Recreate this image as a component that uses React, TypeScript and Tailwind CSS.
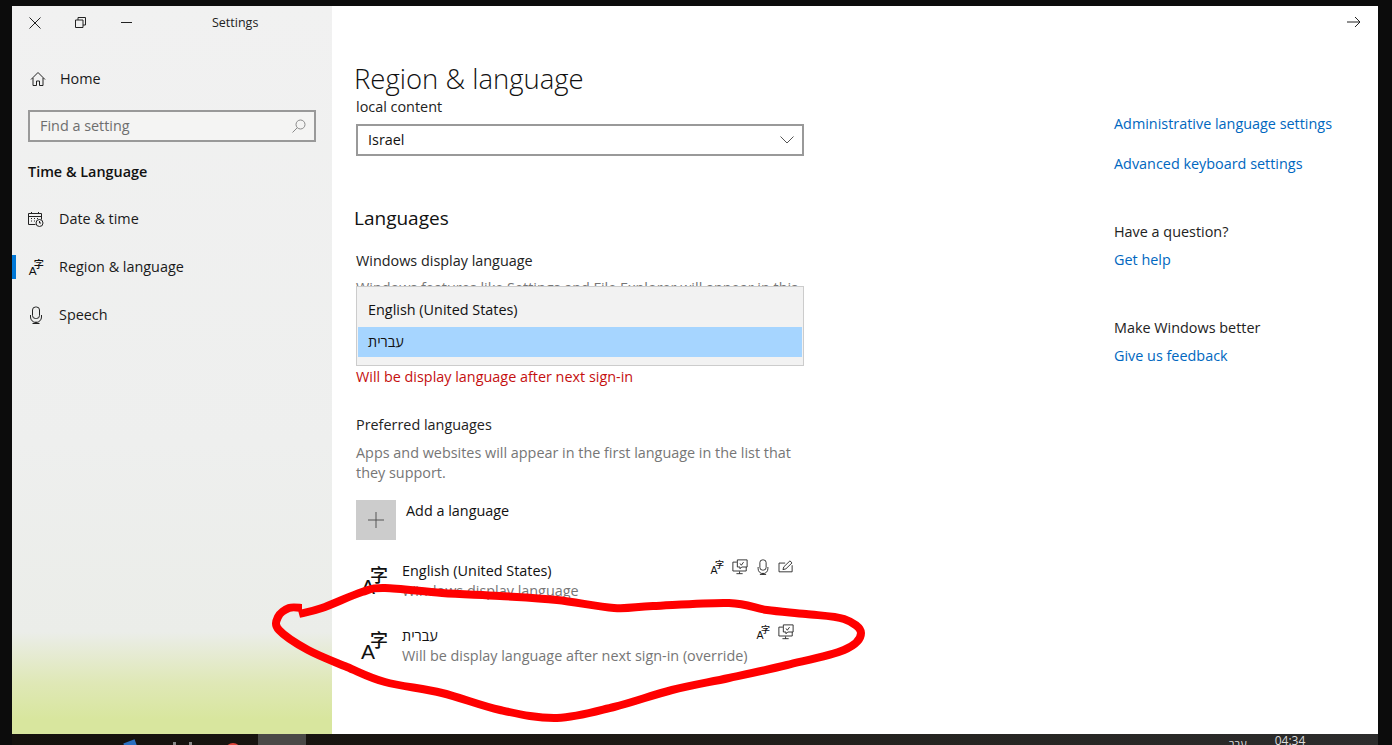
import React from 'react';

const font = "font-['Open_Sans','Noto_Sans_CJK_SC',sans-serif]";

type IconProps = { className?: string };

const LangIcon = ({ className }: IconProps) => (
  <svg viewBox="0 0 28 32" className={className} fill="#111">
    <text x="1" y="30" fontSize="21" fontFamily="Liberation Sans, sans-serif">A</text>
    <text x="10" y="18" fontSize="18" fontWeight="500" fontFamily="Noto Sans CJK SC, sans-serif">字</text>
  </svg>
);

const HomeIcon = () => (
  <svg viewBox="0 0 16 16" className="h-4 w-4" fill="none" stroke="#222" strokeWidth="1">
    <path d="M1 8.500 8 1.500l7 7M3 7v7.500h3.500V10h3v4.500H13V7" />
  </svg>
);

const CalendarIcon = () => (
  <svg viewBox="0 0 16 16" className="h-4 w-4" fill="none" stroke="#222" strokeWidth="1">
    <path d="M.5 2.500h13v6M.5 2.500v11h7M.5 5.500h13M3.500 1v2M10.500 1v2" />
    <path d="M3 7.500h1M6 7.500h1M9 7.500h1M3 10h1M6 10h1" strokeWidth="1.200" />
    <circle cx="11.500" cy="12" r="3.500" fill="#eee" />
    <path d="M11.500 10v2H13" />
  </svg>
);

const MicIcon = ({ className }: IconProps) => (
  <svg viewBox="0 0 14 18" className={className} fill="none" stroke="#222" strokeWidth="1">
    <rect x="3.500" y="1" width="7" height="11.500" rx="3" />
    <path d="M1.500 9v2a5 5 0 0 0 11 0V9M7 15.500v2M3.500 17.500h7" />
  </svg>
);

const DisplayIcon = ({ className }: IconProps) => (
  <svg viewBox="0 0 18 18" className={className} fill="none" stroke="#222" strokeWidth="1">
    <path d="M5.500 3.500H1v10h15V9" />
    <path d="M6 1h11v8h-6l-2 2V9H6z" fill="#fff" />
    <path d="M5 16.500h7M8.500 14v2.500" />
    <path d="M9 5l1.500 2L13 3.500" />
  </svg>
);

const PenIcon = ({ className }: IconProps) => (
  <svg viewBox="0 0 18 16" className={className} fill="none" stroke="#222" strokeWidth="1">
    <path d="M8 3.500H1v10h15V6" />
    <path d="M5.500 11l1-3.200L13.500 1l2.400 2.300-7 6.800z" fill="#fff" />
  </svg>
);

const SearchIcon = () => (
  <svg viewBox="0 0 14 14" className="h-[14px] w-[14px]" fill="none" stroke="#8a8a8a" strokeWidth="1">
    <circle cx="8.500" cy="5.500" r="4.500" />
    <path d="M5.300 8.700.5 13.500" />
  </svg>
);

const NavItem = ({ icon, label, active }: { icon: React.ReactNode; label: string; active?: boolean }) => (
  <div className="relative flex h-12 items-center pl-4 text-[14.4px] text-[#1a1a1a]">
    {active && <span className="absolute left-0 top-3 h-6 w-1 bg-[#0078d7]" />}
    <span className="flex w-[31px] items-center">{icon}</span>
    {label}
  </div>
);

const LangRow = ({ name, sub, icons, className }: { name: string; sub: string; icons: React.ReactNode; className?: string }) => (
  <div className={`flex items-start ${className}`}>
    <LangIcon className="ml-[4px] mt-[3px] h-[32px] w-[28px] shrink-0" />
    <div className="ml-[14px] flex-1">
      <div className="text-[14.4px] leading-5 text-[#111]">{name}</div>
      <div className="text-[14.4px] leading-5 text-[#767676]">{sub}</div>
    </div>
    <div className="-mt-[2px] flex items-center gap-[8px] pr-[10px]">{icons}</div>
  </div>
);

const SideLink = ({ children, className }: { children: React.ReactNode; className?: string }) => (
  <div className={`text-[14.4px] leading-5 text-[#0067c0] ${className}`}>{children}</div>
);

const markerPoints: [number, number][] = [
  [299, 614], [322, 608], [362, 592], [385, 588], [442, 593], [500, 596], [557, 600], [614, 608], [653, 606],
  [729, 603], [767, 610], [806, 614], [844, 619], [861, 633], [844, 650], [787, 665], [729, 678], [672, 690],
  [614, 707], [557, 718], [500, 710], [442, 693], [385, 682], [347, 667], [308, 650], [279, 630], [278, 617],
  [289, 608], [302, 608],
];

// catmull-rom through the points so the marker line stays smooth
const markerPath = markerPoints
  .map(([x, y], i, pts) => {
    if (i === 0) return `M${x} ${y}`;
    const p0 = pts[Math.max(i - 2, 0)];
    const p1 = pts[i - 1];
    const p3 = pts[Math.min(i + 1, pts.length - 1)];
    const c1x = p1[0] + (x - p0[0]) / 6;
    const c1y = p1[1] + (y - p0[1]) / 6;
    const c2x = x - (p3[0] - p1[0]) / 6;
    const c2y = y - (p3[1] - p1[1]) / 6;
    return `C${c1x} ${c1y} ${c2x} ${c2y} ${x} ${y}`;
  })
  .join(' ');

export default function App() {
  return (
    <div className={`relative h-[745px] w-[1392px] overflow-hidden bg-[#0c0c0c] pl-3 pr-[14px] pt-[6px] ${font}`}>
      <div className="flex h-[728px] bg-white">
        {/* left nav */}
        <aside className="w-[320px] shrink-0 bg-[linear-gradient(180deg,#f1f1f1_0%,#eeefee_60%,#ebede9_86%,#dfe8b6_93%,#d8e69e_98%)]">
          <div className="flex h-[33px] items-center pl-[17px] text-[#222]">
            <svg viewBox="0 0 12 12" className="h-[12px] w-[12px]" fill="none" stroke="#222" strokeWidth="1">
              <path d="M.5.500l11 11M11.500.500l-11 11" />
            </svg>
            <svg viewBox="0 0 11 11" className="ml-[34px] h-[11px] w-[11px]" fill="none" stroke="#222" strokeWidth="1">
              <path d="M.5 3h7.500v7.500H.5zM3 3V.5h7.500V8H8" />
            </svg>
            <span className="ml-[35px] h-px w-[11px] bg-[#222]" />
            <span className="ml-[80px] pt-[2px] text-[12.500px] text-[#222]">Settings</span>
          </div>
          <div className="mt-[16px] flex h-12 items-center pl-[18px] text-[14.4px] text-[#1a1a1a]">
            <HomeIcon />
            <span className="ml-[14px]">Home</span>
          </div>
          <div className="mx-4 mt-[7px] flex h-8 items-center justify-between border-2 border-[#999] bg-[#f4f4f3] pl-[10px] pr-2 text-[14.4px] text-[#6e6e6e]">
            Find a setting
            <SearchIcon />
          </div>
          <div className="mt-[20px] pl-4 text-[14.4px] font-semibold leading-5 text-[#111]">Time &amp; Language</div>
          <div className="mt-[13px]">
            <NavItem icon={<CalendarIcon />} label="Date & time" />
            <NavItem icon={<LangIcon className="h-[18px] w-4" />} label="Region & language" active />
            <NavItem icon={<MicIcon className="ml-[1px] h-[18px] w-[14px]" />} label="Speech" />
          </div>
        </aside>

        {/* page body */}
        <main className="relative flex-1">
          <div className="pl-[22px] pt-[53px] text-[27.500px] font-light leading-10 text-[#111]">Region &amp; language</div>
          <div className="w-[472px] pl-6">
            <div className="-mt-[2px] text-[14.4px] leading-5 text-[#222]">local content</div>
            <div className="mt-[7px] flex h-8 items-center justify-between border-2 border-[#999] pl-[10px] pr-[8px] text-[14.4px] text-[#111]">
              Israel
              <svg viewBox="0 0 14 8" className="h-2 w-[14px]" fill="none" stroke="#555" strokeWidth="1">
                <path d="M.5.500 7 7l6.500-6.500" />
              </svg>
            </div>
            <div className="-ml-[2px] mt-[48px] text-[19px] leading-7 text-[#111]">Languages</div>
            <div className="mt-[19px] text-[14.4px] leading-5 text-[#222]">Windows display language</div>
            <div className="relative mt-[7px] h-[125px]">
              <div className="whitespace-nowrap text-[14.4px] leading-5 text-[#767676]">Windows features like Settings and File Explorer will appear in this</div>
              <div className="absolute left-0 top-[8px] h-[80px] w-full border border-[#ccc] bg-[#f2f2f2] px-px pt-[13px] text-[14.4px] text-[#111]">
                <div className="pl-[10px] leading-5">English (United States)</div>
                <div className="mt-[7px] flex h-[30px] items-center bg-[#a6d5ff] pl-[10px]">עברית</div>
              </div>
              <div className="absolute left-0 top-[89px] text-[14.4px] leading-5 text-[#c50f0f]">Will be display language after next sign-in</div>
            </div>
            <div className="mt-[12px] text-[14.4px] leading-5 text-[#222]">Preferred languages</div>
            <div className="mt-[8px] text-[14.4px] leading-5 text-[#767676]">Apps and websites will appear in the first language in the list that they support.</div>
            <div className="mt-[17px] flex items-start">
              <div className="flex h-10 w-10 items-center justify-center bg-[#cccccc]">
                <svg viewBox="0 0 16 16" className="h-4 w-4" stroke="#555" strokeWidth="1"><path d="M8 0v16M0 8h16" /></svg>
              </div>
              <span className="ml-[10px] mt-px text-[14.4px] leading-5 text-[#111]">Add a language</span>
            </div>
            <LangRow
              className="mt-[21px]"
              name="English (United States)"
              sub="Windows display language"
              icons={<>
                <LangIcon className="h-[16px] w-[14px]" />
                <DisplayIcon className="h-4 w-4" />
                <MicIcon className="h-4 w-[14px]" />
                <PenIcon className="h-[14px] w-4" />
              </>}
            />
            <LangRow
              className="mt-[25px]"
              name="עברית"
              sub="Will be display language after next sign-in (override)"
              icons={<>
                <LangIcon className="h-[16px] w-[14px]" />
                <DisplayIcon className="h-4 w-4" />
              </>}
            />
          </div>

          {/* help links */}
          <div className="absolute left-[782px] top-[108px] w-[240px]">
            <SideLink>Administrative language settings</SideLink>
            <SideLink className="mt-5">Advanced keyboard settings</SideLink>
            <div className="mt-[48px] text-[14.4px] leading-5 text-[#222]">Have a question?</div>
            <SideLink className="mt-2">Get help</SideLink>
            <div className="mt-[48px] text-[14.4px] leading-5 text-[#222]">Make Windows better</div>
            <SideLink className="mt-2">Give us feedback</SideLink>
          </div>

          <svg viewBox="0 0 14 12" className="absolute right-[17px] top-[10px] h-3 w-[14px]" fill="none" stroke="#222" strokeWidth="1">
            <path d="M0 6h13M8 1l5 5-5 5" />
          </svg>
        </main>
      </div>

      {/* taskbar strip, mostly cut off */}
      <div className="flex h-[11px] overflow-hidden bg-[linear-gradient(90deg,#14110d_0%,#1c1813_40%,#262522_70%,#2c2c2c_100%)]">
        <span className="ml-[113px] mt-[7px] h-3 w-3 rotate-[-20deg] bg-[#2a6fc0]" />
        <span className="ml-[36px] mt-[8px] h-3 w-[3px] bg-[#888]" />
        <span className="ml-[13px] mt-[8px] h-3 w-[3px] bg-[#888]" />
        <span className="ml-[33px] mt-[9px] h-4 w-4 rounded-full bg-[#e0453a]" />
        <span className="ml-[17px] h-[11px] w-[48px] bg-[#4a4947]" />
        <span className="ml-[923px] mt-[3px] text-[11px] leading-[14px] text-[#ddd]">עבר</span>
        <span className="ml-[28px] text-[12px] leading-[14px] text-[#ddd]">04:34</span>
      </div>

      {/* red hand drawn marker */}
      <svg className="pointer-events-none absolute left-0 top-0" width="1392" height="745" fill="none">
        <path d={markerPath} stroke="#ff0000" strokeWidth="8" strokeLinejoin="round" strokeLinecap="butt" />
      </svg>
    </div>
  );
}
